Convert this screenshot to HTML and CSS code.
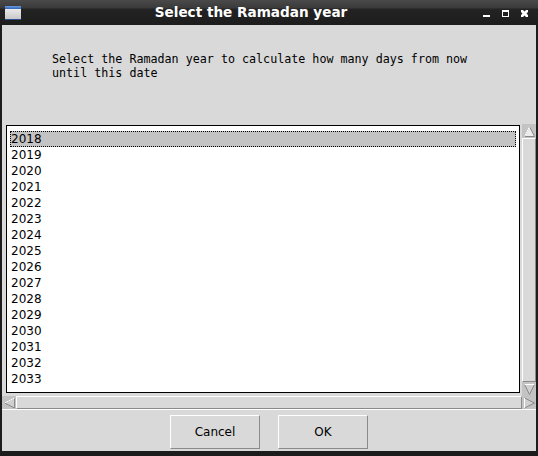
FILE: index.html
```html
<!DOCTYPE html>
<html>
<head>
<meta charset="utf-8">
<link rel="stylesheet" href="styles.css">
</head>
<body>
<div class="window">
  <div class="titlebar">
    <div class="appicon"><div class="appicon-top"></div></div>
    <div class="title">Select the Ramadan year</div>
    <div class="controls">
      <svg width="8" height="8" viewBox="0 0 8 8"><rect x="0" y="5" width="7" height="2" fill="#fff"/></svg>
      <svg width="8" height="8" viewBox="0 0 8 8"><rect x="0.5" y="0.5" width="6" height="6" fill="none" stroke="#fff"/><rect x="0" y="0" width="7" height="2" fill="#fff"/></svg>
      <svg width="8" height="8" viewBox="0 0 8 8"><path d="M0 0h2l1.5 1.5L5 0h2v2L5.5 3.5 7 5v2H5L3.5 5.5 2 7H0V5l1.5-1.5L0 2z" fill="#fff"/></svg>
    </div>
  </div>
  <div class="content">
    <div class="message">Select the Ramadan year to calculate how many days from now<br>until this date</div>
    <div class="listrow">
      <div class="listbox">
        <div class="item selected">2018</div>
        <div class="item">2019</div>
        <div class="item">2020</div>
        <div class="item">2021</div>
        <div class="item">2022</div>
        <div class="item">2023</div>
        <div class="item">2024</div>
        <div class="item">2025</div>
        <div class="item">2026</div>
        <div class="item">2027</div>
        <div class="item">2028</div>
        <div class="item">2029</div>
        <div class="item">2030</div>
        <div class="item">2031</div>
        <div class="item">2032</div>
        <div class="item">2033</div>
      </div>
      <div class="vscroll">
        <div class="arrow"><svg width="13" height="13" viewBox="0 0 13 13"><path d="M6.5 1.5L1.5 11.5H11.5Z" fill="#ececec" stroke="#8a8a8a"/><path d="M6.5 1.5L1.5 11.5" stroke="#fff"/></svg></div>
        <div class="vthumb"></div>
        <div class="arrow"><svg width="13" height="13" viewBox="0 0 13 13"><path d="M1.5 1.5H11.5L6.5 11.5Z" fill="#d0d0d0" stroke="#8a8a8a"/><path d="M1.5 1.5H11.5" stroke="#fff"/></svg></div>
      </div>
    </div>
    <div class="hscroll">
      <div class="harrow"><svg width="13" height="12" viewBox="0 0 13 12"><path d="M1.5 6L11.5 1V11Z" fill="#d0d0d0" stroke="#8a8a8a"/><path d="M1.5 6L11.5 1" stroke="#fff"/></svg></div>
      <div class="hthumb"></div>
      <div class="harrow"><svg width="13" height="12" viewBox="0 0 13 12"><path d="M11.5 6L1.5 1V11Z" fill="#d0d0d0" stroke="#8a8a8a"/><path d="M1.5 1V11" stroke="#fff"/></svg></div>
    </div>
    <div class="buttons">
      <div class="btn">Cancel</div>
      <div class="btn">OK</div>
    </div>
  </div>
</div>
</body>
</html>
```
FILE: styles.css
```css
html, body {
  margin: 0;
  padding: 0;
  background: #1c1c1c;
}
.window {
  width: 538px;
  height: 456px;
  box-sizing: border-box;
  display: flex;
  flex-direction: column;
  background: #1c1c1c;
  padding: 0 2px 5px 2px;
}
.titlebar {
  height: 25px;
  flex: none;
  display: flex;
  align-items: center;
  position: relative;
  background: linear-gradient(#4a4a4a 0px, #3a3a3a 8px, #232323 9px, #1e1e1e 22px, #1c1c1c 25px);
  margin: 0 -2px;
}
.appicon {
  width: 16px;
  height: 14px;
  margin-left: 5px;
  background: linear-gradient(#f4f4f4, #c8c8c8);
  border-bottom: 1px solid #2a4f8f;
  box-sizing: border-box;
}
.appicon-top {
  height: 3px;
  background: linear-gradient(#6a9ae0, #2f63b8);
}
.title {
  position: absolute;
  left: 0;
  right: 0;
  top: 0;
  line-height: 24px;
  text-align: center;
  color: #ffffff;
  font-family: "DejaVu Sans", sans-serif;
  font-weight: bold;
  font-size: 13.6px;
  padding-right: 36px;
}
.controls {
  margin-left: auto;
  margin-right: 9px;
  display: flex;
  gap: 11px;
  padding-top: 3px;
}
.controls svg { display: block; }
.content {
  flex: 1;
  background: #d9d9d9;
  display: flex;
  flex-direction: column;
}
.message {
  font-family: "DejaVu Sans Mono", monospace;
  font-size: 11.7px;
  line-height: 14px;
  color: #000;
  padding: 27px 0 0 50px;
  height: 72px;
}
.listrow {
  display: flex;
  height: 271px;
  margin-top: 1px;
}
.listbox {
  margin-left: 4px;
  width: 514px;
  height: 268px;
  box-sizing: border-box;
  border: 1px solid #000;
  background: #fff;
  padding: 5px 3px 0 3px;
  font-family: "DejaVu Sans", sans-serif;
  font-size: 12px;
}
.item {
  height: 16px;
  line-height: 16px;
  padding-left: 1px;
  color: #000;
  box-sizing: border-box;
}
.item.selected {
  background: #c3c3c3;
  outline: 1px dotted #000;
  outline-offset: -1px;
}
.vscroll {
  margin-left: auto;
  width: 14px;
  display: flex;
  flex-direction: column;
  background: #c3c3c3;
  margin-top: -1px;
}
.arrow {
  height: 14px;
  flex: none;
  display: flex;
  align-items: center;
  justify-content: center;
}
.arrow svg, .harrow svg { display: block; }
.vthumb {
  flex: 1;
  background: #d9d9d9;
  border-top: 1px solid #fff;
  border-left: 1px solid #fff;
  border-right: 1px solid #8a8a8a;
  border-bottom: 1px solid #8a8a8a;
}
.hscroll {
  display: flex;
  height: 13px;
  background: #c3c3c3;
  border-bottom: 1px solid #fff;
  margin-top: 0;
}
.harrow {
  width: 14px;
  flex: none;
  display: flex;
  align-items: center;
  justify-content: center;
}
.hthumb {
  flex: 1;
  background: #d9d9d9;
  border-top: 1px solid #fff;
  border-left: 1px solid #fff;
  border-right: 1px solid #8a8a8a;
  border-bottom: 1px solid #8a8a8a;
}
.buttons {
  display: flex;
  justify-content: center;
  gap: 18px;
  padding-top: 5px;
}
.btn {
  width: 90px;
  height: 34px;
  box-sizing: border-box;
  border: 1px solid;
  border-color: #fff #8a8a8a #8a8a8a #fff;
  background: #d9d9d9;
  font-family: "DejaVu Sans", sans-serif;
  font-size: 12px;
  color: #000;
  display: flex;
  align-items: center;
  justify-content: center;
}
```
